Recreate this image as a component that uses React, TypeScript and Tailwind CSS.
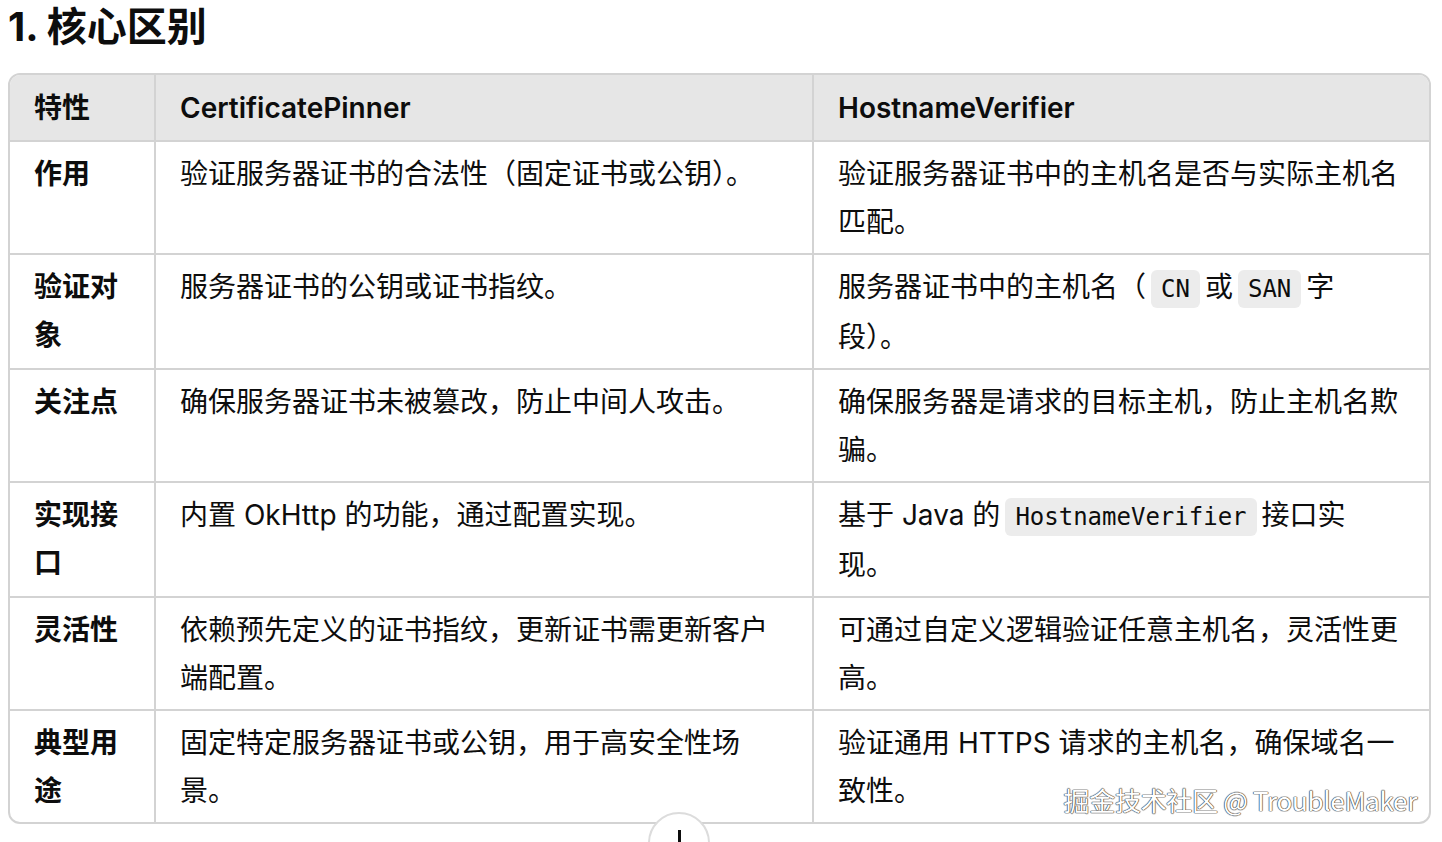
import React from 'react';

type Cell = React.ReactNode;

const Code = ({ children }: { children: React.ReactNode }) => (
  <code className="mx-[5px] rounded-md bg-[#ececec] px-[10px] py-[5px] font-['DejaVu_Sans_Mono',monospace] text-[24px] text-[#0d0d0d]">
    {children}
  </code>
);

const rows: [string, Cell, Cell][] = [
  ['作用', '验证服务器证书的合法性（固定证书或公钥）。', '验证服务器证书中的主机名是否与实际主机名匹配。'],
  [
    '验证对象',
    '服务器证书的公钥或证书指纹。',
    <>
      服务器证书中的主机名（<Code>CN</Code>或<Code>SAN</Code>字
      <br />
      段）。
    </>,
  ],
  ['关注点', '确保服务器证书未被篡改，防止中间人攻击。', '确保服务器是请求的目标主机，防止主机名欺骗。'],
  [
    '实现接口',
    '内置 OkHttp 的功能，通过配置实现。',
    <>
      基于 Java 的<Code>HostnameVerifier</Code>接口实
      <br />
      现。
    </>,
  ],
  ['灵活性', '依赖预先定义的证书指纹，更新证书需更新客户端配置。', '可通过自定义逻辑验证任意主机名，灵活性更高。'],
  ['典型用途', '固定特定服务器证书或公钥，用于高安全性场景。', '验证通用 HTTPS 请求的主机名，确保域名一致性。'],
];

export default function App() {
  return (
    <div className="relative h-[842px] overflow-hidden bg-white px-[8px] font-['Inter','Noto_Sans_CJK_SC',sans-serif] text-[#0d0d0d]">
      <h1 className="h-[73px] pt-[1px] text-[40px] font-bold leading-[52px]">1. 核心区别</h1>

      <div className="relative w-[1423px] overflow-hidden rounded-xl border-2 border-[#d3d3d3]">
        <table className="w-full table-fixed border-collapse">
          <colgroup>
            <col className="w-[145px]" />
            <col className="w-[658px]" />
            <col />
          </colgroup>
          <thead>
            <tr className="h-[66px] bg-[#e6e6e6]">
              <th className="border-r-2 border-[#d3d3d3] px-[24px] text-left text-[28px] font-semibold">特性</th>
              <th className="border-r-2 border-[#d3d3d3] px-[24px] text-left text-[28px] font-semibold">CertificatePinner</th>
              <th className="px-[24px] text-left text-[28px] font-semibold">HostnameVerifier</th>
            </tr>
          </thead>
          <tbody>
            {rows.map(([k, a, b], i) => (
              <tr key={i} className="border-t-2 border-[#d3d3d3] align-top">
                <td className="border-r-2 border-[#d3d3d3] px-[24px] pt-[8px] pb-[7px] text-[28px] font-bold leading-[48px]">{k}</td>
                <td className="border-r-2 border-[#d3d3d3] px-[24px] pt-[8px] pb-[7px] text-[28px] leading-[48px]">{a}</td>
                <td className="pl-[24px] pr-[30px] pt-[8px] pb-[7px] text-[28px] leading-[48px]">{b}</td>
              </tr>
            ))}
          </tbody>
        </table>

        <div className="absolute bottom-[3px] right-[12px] font-['Noto_Sans_CJK_SC',sans-serif] text-[26px] tracking-[-0.3px] text-white [text-shadow:0_0_1px_#444,0_0_1px_#444,0_0_1px_#444,0_0_1px_#444]">
          掘金技术社区 @ TroubleMaker
        </div>
      </div>

      <div className="absolute left-[648px] top-[812px] flex h-[62px] w-[62px] justify-center rounded-full border-2 border-[#dcdcdc] bg-white pt-[16px]">
        <div className="h-[20px] w-[3px] bg-[#0d0d0d]" />
      </div>
    </div>
  );
}
